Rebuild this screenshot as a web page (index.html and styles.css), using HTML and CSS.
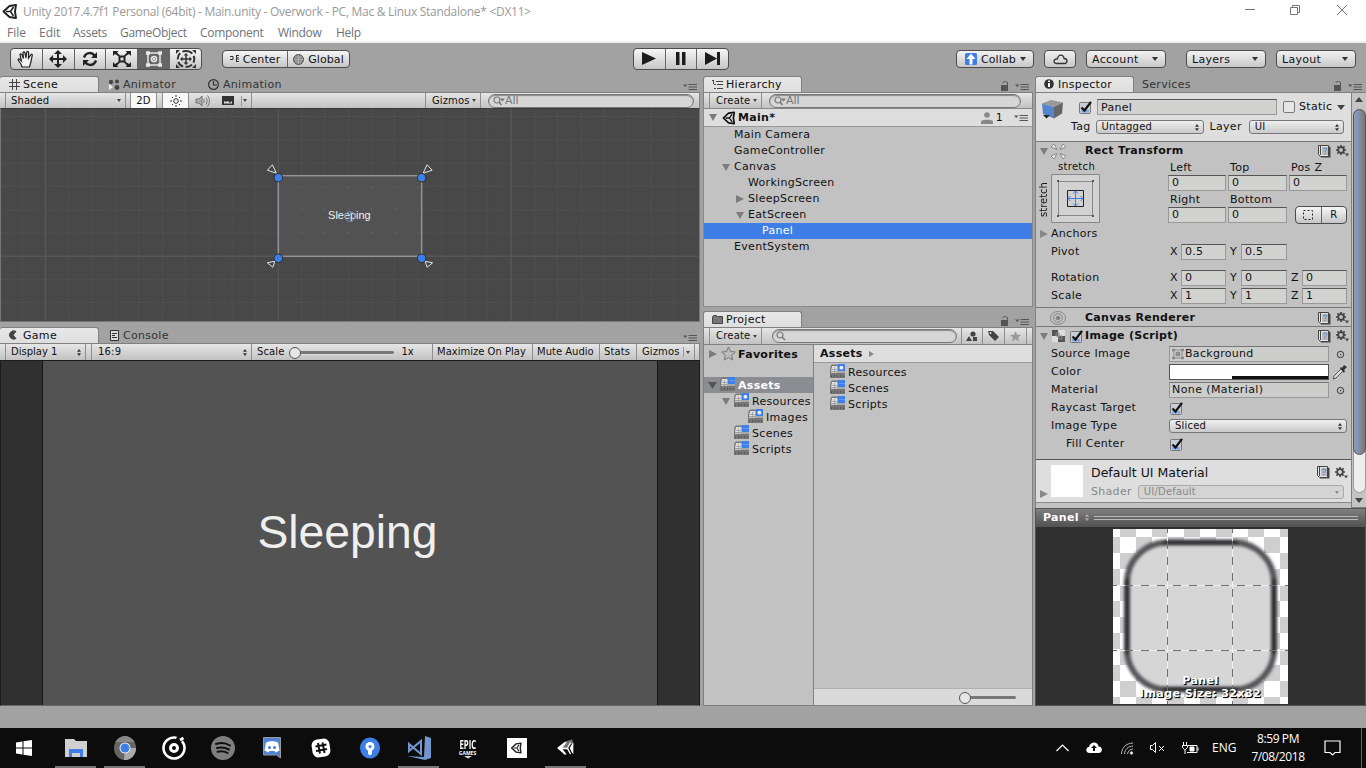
FILE: index.html
```html
<!DOCTYPE html>
<html lang="en">
<head>
<meta charset="utf-8">
<title>Unity 2017.4.7f1 Personal (64bit) - Main.unity</title>
<link rel="stylesheet" href="styles.css">
</head>
<body>
<svg class="defs" width="0" height="0">
  <defs>
    <symbol id="unity" viewBox="0 0 16 16"><path fill="none" stroke="currentColor" stroke-width="1.900" stroke-linejoin="round" d="M1.500 8 7.500 2.500 14 1.500 13 8l1 6.500-6.500-1z"/><path stroke="currentColor" stroke-width="1.500" d="M8.500 8H4M8.500 8l3-4.500M8.500 8l3 4.500"/></symbol>
    <symbol id="unityfill" viewBox="0 0 16 16"><path fill="#777" d="M8 2 13.500.500 15 6 13 4.500 8.500 7.500H2.500z"/><path fill="#fff" d="M.500 7.500 7 2.500l1.500.500L5 7.500h4L11.500 3l1 .5L10 8l2.500 5-1 .5L9 9H5l3.500 4.500-1.500.500L.500 8.500z"/><path fill="#fff" d="m13 5 1.500-2V13.500L13 11.500 11.300 8z"/></symbol>
    <symbol id="menu" viewBox="0 0 14 8"><path fill="#555" d="M0 1.500h4.500L2.200 4zM5.500 1H14v1H5.500zM5.500 3.500H14v1H5.500zM5.500 6H14v1H5.500z"/></symbol>
    <symbol id="lock" viewBox="0 0 8 10"><path fill="#555" d="M0 4h6V2.500C6 .500 2.500.500 2.500 2H1.500C1.500-.500 7-.500 7 2.500V10H0z"/></symbol>
    <symbol id="search" viewBox="0 0 12 10"><circle cx="4" cy="4" r="3" fill="none" stroke="#777" stroke-width="1.200"/><path stroke="#777" stroke-width="1.500" d="m6 6 3 3"/></symbol>
    <symbol id="searchd" viewBox="0 0 12 10"><circle cx="4" cy="4" r="3" fill="none" stroke="#777" stroke-width="1.200"/><path stroke="#777" stroke-width="1.500" d="m6 6 2.500 3"/><path fill="#777" d="M7 2.500h5L9.500 5.500z"/></symbol>
    <symbol id="down" viewBox="0 0 8 7"><path fill="#7c7c7c" d="M0 0h8L4 7z"/></symbol>
    <symbol id="updown" viewBox="0 0 4 7"><path fill="#333" d="M0 2.700 2 0l2 2.700zM0 4.300h4L2 7z"/></symbol>
    <symbol id="book" viewBox="0 0 13 13"><path fill="#e4e4e4" stroke="#444" d="M.500.500h10v11H2.500l-2-2z"/><path fill="#444" d="M11 1.500l1.500.500v10.500H3v-1h8zM2 1h1v9H2z"/><path fill="#bbb" d="M4 2h6v8H4z"/><path fill="none" stroke="#457fd8" d="M5.500 4.500c0-2 3.500-2 3 0-.200 1-1.500 1-1.500 2.500M7 8v1"/></symbol>
    <symbol id="gear" viewBox="0 0 14 12"><circle cx="5" cy="5" r="2.800" fill="none" stroke="#444" stroke-width="1.800"/><path stroke="#444" stroke-width="1.700" d="M5 0v2M5 8v2M0 5h2M8 5h2M1.400 1.400 3 3M7 7l1.600 1.600M1.400 8.600 3 7M7 3l1.600-1.600"/><path fill="#444" d="M9 8.500h4L11 11.500z"/></symbol>
    <symbol id="folder" viewBox="0 0 16 14"><path fill="#777" d="M.500 2 2 .500h6.500v4H15V14H0V7z"/><path fill="#ddd" d="M2 2h5.500v5H1z"/><path fill="#ccc" d="M1 7.500h7V9H1z"/><path fill="#a8a8a8" d="M7 7h8v2H7z"/><path fill="#555" d="M1 11.500h1v1.500H1zM4 11h1v2H4zM7 11.500h1v1.500H7zM10 11h1v2h-1zM13 11.500h1v1.500h-1z"/><path stroke="#999" stroke-width=".700" d="M4.500 3v6M1.500 5.500h6"/><path fill="#3d80e8" d="M8 0h7v7H8z"/></symbol>
    <symbol id="folders" viewBox="0 0 16 14"><use href="#folder"/><path fill="#8cb2f0" d="M9.500 3h1v1h-1zM11.500 3h1v1h-1zM13.500 3h1v1h-1z"/></symbol>
    <symbol id="folderr" viewBox="0 0 16 14"><use href="#folder"/><circle cx="11.400" cy="3.700" r="1.900" fill="#eee"/></symbol>
    <symbol id="check" viewBox="0 0 13 13"><rect x=".500" y="1.500" width="11" height="11" rx="1" fill="#c9cdd5" stroke="#777"/><path fill="#7fa6e4" d="M2 9h8v2.500H2z"/><path fill="none" stroke="#111" stroke-width="2.200" d="m2.500 6.500 3 3L12 .800"/></symbol>
    <symbol id="spin" viewBox="0 0 9 9"><circle cx="4.500" cy="4.500" r="3.200" fill="none" stroke="#333"/><rect x="4" y="4" width="1.200" height="1.200" fill="#333"/></symbol>
  </defs>
</svg>

<header class="titlebar">
  <svg class="logo" width="16" height="17"><use href="#unity"/></svg>
  <span class="title">Unity 2017.4.7f1 Personal (64bit) - Main.unity - Overwork - PC, Mac &amp; Linux Standalone* &lt;DX11&gt;</span>
  <svg class="winbtns" width="104" height="12" fill="none" stroke="#777"><path d="M1 5.500h10M46.500 3.500h7v7h-7zM48.500 3.500v-2h7v7h-2M93 1l10 10M103 1 93 11"/></svg>
</header>
<nav class="menubar"><span class="m1">File</span><span class="m2">Edit</span><span class="m3">Assets</span><span class="m4">GameObject</span><span class="m5">Component</span><span class="m6">Window</span><span>Help</span></nav>

<div class="toolbar">
  <div class="btns tools">
    <i><svg width="18" height="18" fill="none" stroke="#222" stroke-width="1.200"><path d="M5 17c0-2.500-3-5-4-7.500 1-1.500 2 0 3.500 1.500L3 4.500C4 3 5 4.500 5.500 6L6.500 8.500 6 2.500c1-1.500 2 0 2 1L9 8l.800-6c1-1.200 2 0 1.800 1L11.500 8.300 14 4.500c1.500-.500 1.500.500 1 2l-1 5L12.500 17z" fill="#f4f4f4"/></svg></i>
    <i><svg width="18" height="18"><path fill="#222" d="m9 0 4 4h-3v4h4V5l4 4-4 4v-3h-4v4h3l-4 4-4-4h3v-4H4v3L0 9l4-4v3h4V4H5z"/></svg></i>
    <i><svg width="18" height="16" fill="none" stroke="#222" stroke-width="2.400"><path d="M3 6.500C5 1 11 1 13.500 4.500M15 9.500c-2 5.500-8 5.500-10.500 2"/><path fill="#222" stroke="none" d="M16 1v6h-6zM2 15V9h6z"/></svg></i>
    <i><svg width="18" height="16"><path fill="#222" d="M0 0h5.500L4 1.500 7 4.500 6 5.500 2 3 0 5zM18 0h-5.500L14 1.500l-3 3 1 1L16 3l2 2zM0 16h5.500L4 14.500l3-3-1-1L2 13l-2-2zM18 16h-5.500l1.500-1.500-3-3 1-1 4 2.500 2-2z"/><path fill="#ddd" stroke="#222" stroke-width="2" d="M6.500 5.500h5v5h-5z"/></svg></i>
    <i class="on"><svg width="18" height="18" fill="none" stroke="#e8e8e8" stroke-width="1.500"><path d="M3 3h12v12H3z"/><circle cx="9" cy="9" r="2.600"/><path stroke-width="3.500" d="M1 3h4M13 3h4M1 15h4M13 15h4"/><circle cx="9" cy="9" r=".600"/></svg></i>
    <i><svg width="20" height="18" fill="none" stroke="#333" stroke-width="2"><path stroke-dasharray="7 2.500" d="M10 1c11 0 11 16 0 16S-1 1 10 1"/><path stroke-width="1.500" d="M10 4v10M5 9h10"/><path fill="#333" stroke="none" d="m10 3 2.500 2.500h-5zM10 15l2.500-2.500h-5zM4 9l2.500-2.500v5zM16 9l-2.500-2.500v5zM0 0h4L0 4zM20 0h-4l4 4zM0 18h4l-4-4zM20 18h-4l4-4z"/></svg></i>
  </div>
  <div class="btns pivot">
    <i><svg width="10" height="8" fill="none" stroke="#333"><path d="M0 1.500h3v3H0M6 .500h3M6 6.500h3M6.500 0v7M8 2v3"/></svg><span>Center</span></i>
    <i><svg width="12" height="11" fill="none" stroke="#555"><circle cx="5.500" cy="5.500" r="5" fill="#888"/><path d="M1 5.500h9M5.500 1v9M2 3h7M2 8h7" stroke="#bbb" stroke-width=".700"/></svg><span>Global</span></i>
  </div>
  <div class="btns play">
    <i><svg width="16" height="14"><path fill="#1c1c1c" d="M1 0v13l14-6.500z"/></svg></i>
    <i><svg width="10" height="14"><path fill="#1c1c1c" d="M0 0h3.500v13H0zM6 0h3.500v13H6z"/></svg></i>
    <i><svg width="16" height="14"><path fill="#1c1c1c" d="M0 0v13l12-6.500zM12 0h3v13h-3z"/></svg></i>
  </div>
  <div class="drop collab"><svg width="12" height="12"><rect width="12" height="12" rx="1.500" fill="#3d7fe6"/><path fill="#fff" d="m6 .500 4.500 5.500H7.500v5.500h-3V6h-3z"/></svg><span>Collab</span><b></b></div>
  <div class="drop cloud"><svg width="15" height="11" fill="none" stroke="#333" stroke-width="1.300"><path d="M4 9.500c-4.500 0-3.500-5 .500-4.500C5 0 11 0 11 4.500c4 0 4 5 0 5z"/></svg></div>
  <div class="drop account"><span>Account</span><b></b></div>
  <div class="drop layers"><span>Layers</span><b></b></div>
  <div class="drop layout"><span>Layout</span><b></b></div>
</div>

<main class="work">
  <section class="left">
    <div class="tabs">
      <div class="tab sc"><svg width="12" height="12" stroke="#444" fill="none"><path d="M3.500 0v11M7.500 0v11M0 3.500h11M0 7.500h11"/></svg>Scene</div>
      <div class="idle an1"><svg width="13" height="12" fill="#444"><circle cx="3" cy="3" r="2.200"/><circle cx="9" cy="2.500" r="2"/><circle cx="9" cy="8.500" r="2.400"/><path fill="#eee" d="M1 5v6l4-3z"/></svg>Animator</div>
      <div class="idle an2"><svg width="13" height="12" fill="none" stroke="#333" stroke-width="1.200"><circle cx="5.500" cy="5.500" r="4.900"/><path d="M5.500 2v4H9"/></svg>Animation</div>
      <svg class="pm" width="14" height="8"><use href="#menu"/></svg>
    </div>
    <div class="bar scenebar">
      <div class="cell shaded">Shaded<b></b></div><div class="cell lit two">2D</div><div class="sp7"></div>
      <div class="cell lit sun"><svg width="12" height="12" fill="none" stroke="#333"><circle cx="6" cy="6" r="2.300"/><path d="M6 0v2M6 10v2M0 6h2M10 6h2M2 2l1 1M9 9l1 1M2 10l1-1M9 3l1-1"/></svg></div>
      <div class="cell snd"><svg width="15" height="12" fill="none" stroke="#777"><path fill="#aaa" d="M1 4h3l3-3v10L4 8H1z"/><path d="M9 4v4M11 2.500c1.500 2 1.500 5 0 7M12.500.500c2.500 3 2.500 8 0 11"/></svg></div>
      <div class="cell pic"><svg width="13" height="10"><path fill="#333" d="M0 0h12v9H0z"/><path fill="#ddd" d="M2 7.500V5l2 1 2-1 2 2 2-2v2.500z"/></svg><u></u><b></b></div>
      <div class="cell giz">Gizmos<b></b></div>
      <div class="search"><svg width="14" height="10"><use href="#searchd"/></svg>All</div>
    </div>
    <div class="scene">
      <svg width="698" height="213" viewBox="1 108 698 213">
        <path class="grid" d="M20.500 108v213M67.500 108v213M91.500 108v213M114.500 108v213M137.500 108v213M161.500 108v213M184.500 108v213M208.500 108v213M231.500 108v213M254.500 108v213M301.500 108v213M324.500 108v213M348.500 108v213M371.500 108v213M394.500 108v213M418.500 108v213M442.500 108v213M465.500 108v213M488.500 108v213M535.500 108v213M558.500 108v213M582.500 108v213M605.500 108v213M629.500 108v213M652.500 108v213M675.500 108v213M0 115.500h700M0 139.500h700M0 162.500h700M0 185.500h700M0 209.500h700M0 232.500h700M0 279.500h700M0 302.500h700"/>
        <path stroke="#565656" stroke-width="1.500" d="M44 108v213M278 108v213M512 108v213M0 256h700"/>
        <rect x="278" y="175" width="144" height="81" fill="#525252" stroke="#939398" stroke-width="1.500"/>
        <path class="dots" d="M301 186.500h121M301 208.500h121M301 232.500h121"/>
        <text x="328" y="219" class="slabel">Sleeping</text>
        <circle cx="350" cy="216" r="5" fill="none" stroke="#888"/><path fill="none" stroke="#457fd8" stroke-dasharray="1.500 1.500" d="M347 212h6M348 221h5M345 214v4M355 214v4"/>
        <path class="tri" d="m267 169.500 5-5.500 4 8.500zM432.500 169.500l-5-5.500-4 8.500zM267 262.500l5.500 4.500 2-6zM433 262.500l-5.500 4.500-2-6z"/>
        <g fill="#3d7fe6" stroke="#2c2c2c"><circle cx="278" cy="177" r="4.300"/><circle cx="422" cy="177" r="4.300"/><circle cx="278" cy="258" r="4.300"/><circle cx="422" cy="258" r="4.300"/></g>
      </svg>
    </div>
    <div class="tabs gametabs">
      <div class="tab gm"><svg width="12" height="11"><path fill="#444" d="M8.500 1.500 5.500 5l3 3.500A4.500 4.500 0 1 1 8.500 1.500"/></svg>Game</div>
      <div class="idle cons"><svg width="10" height="12" fill="#ddd" stroke="#333"><path d="M.500.500h8v10h-8zM2 3.500h5M2 5.500h3M2 7.500h5"/></svg>Console</div>
      <svg class="pm" width="14" height="8"><use href="#menu"/></svg>
    </div>
    <div class="bar gamebar">
      <div class="cell disp">Display 1<svg width="4" height="7"><use href="#updown"/></svg></div>
      <div class="cell none"></div>
      <div class="cell ratio">16:9<svg width="4" height="7"><use href="#updown"/></svg></div>
      <div class="cell scale">Scale<div class="slider"></div>1x</div>
      <div class="cell mx">Maximize On Play</div><div class="cell mu">Mute Audio</div><div class="cell st">Stats</div><div class="cell gz">Gizmos<u></u><b></b></div>
    </div>
    <div class="game"><div class="stage"><span>Sleeping</span></div></div>
  </section>

  <section class="mid">
    <div class="tabs">
      <div class="tab hi"><svg width="12" height="10" fill="none" stroke="#444"><path d="M0 .500h2M4 1.500h7M2 4.500h2M5 4.500h6M2 8.500h2M5 8.500h6M1.500 1v3"/></svg>Hierarchy</div>
      <svg class="lk" width="8" height="10"><use href="#lock"/></svg><svg class="pm" width="14" height="8"><use href="#menu"/></svg>
    </div>
    <div class="bar hbar"><div class="cell create">Create<b></b></div><div class="search"><svg width="14" height="10"><use href="#searchd"/></svg>All</div></div>
    <div class="tree">
      <div class="scenehead"><svg width="8" height="7"><use href="#down"/></svg><svg class="ul" width="14" height="14"><use href="#unity"/></svg><strong>Main*</strong><svg class="usr" width="12" height="12" fill="#888"><circle cx="6" cy="3" r="2.800"/><path d="M0 12V9.500C0 7 12 7 12 9.500V12z"/></svg><em>1</em><svg width="14" height="8"><use href="#menu"/></svg></div>
      <div class="row r1">Main Camera</div>
      <div class="row r1">GameController</div>
      <div class="row r1 tog"><svg width="8" height="7"><use href="#down"/></svg>Canvas</div>
      <div class="row r2">WorkingScreen</div>
      <div class="row r2 tog"><svg width="8" height="8"><path fill="#7c7c7c" d="M0 0v8l8-4z"/></svg>SleepScreen</div>
      <div class="row r2 tog"><svg width="8" height="7"><use href="#down"/></svg>EatScreen</div>
      <div class="row r3 sel">Panel</div>
      <div class="row r1">EventSystem</div>
    </div>
    <div class="tabs protabs">
      <div class="tab hi"><svg width="12" height="10"><path fill="#777" stroke="#444" d="M.500 2v6.500h10v-7h-5l-1-1h-3z"/></svg>Project</div>
      <svg class="lk" width="8" height="10"><use href="#lock"/></svg><svg class="pm" width="14" height="8"><use href="#menu"/></svg>
    </div>
    <div class="bar pbar"><div class="cell create">Create<b></b></div><div class="search"><svg width="12" height="10"><use href="#search"/></svg></div>
      <div class="cell ic"><svg width="12" height="11" fill="#444"><circle cx="7" cy="3" r="2.600"/><path d="M0 10l3-5 3 5zM7 6h4v4H7z"/></svg></div>
      <div class="cell ic"><svg width="12" height="12"><path fill="#444" d="M0 1h5l6 6-4 4-6-6z"/><circle cx="2.500" cy="3" r="1" fill="#ddd"/></svg></div>
      <div class="cell ic"><svg width="12" height="11"><path fill="#999" d="m5.500 0 1.600 3.700 4 .300-3 2.600 1 3.900-3.600-2.200-3.500 2.200 1-3.900-3-2.600 4-.300z"/></svg></div><div class="cell end"></div>
    </div>
    <div class="project">
      <div class="folders">
        <div class="fr fav"><svg width="8" height="8"><path fill="#7c7c7c" d="M0 0v8l8-4z"/></svg><svg width="15" height="15"><path fill="#bbb" stroke="#777" d="m7.500 1 2 4.500 4.800.500-3.600 3.300 1 4.700-4.200-2.400L3.300 14l1-4.700L.700 6l4.800-.500z"/></svg><strong>Favorites</strong></div>
        <div class="fr root"><svg width="9" height="7"><path fill="#555" d="M0 0h9L4.500 7z"/></svg><svg width="16" height="14"><use href="#folders"/></svg><strong>Assets</strong></div>
        <div class="fr f1"><svg width="8" height="7"><use href="#down"/></svg><svg width="16" height="14"><use href="#folderr"/></svg><span>Resources</span></div>
        <div class="fr f3"><svg width="16" height="14"><use href="#folderr"/></svg><span>Images</span></div>
        <div class="fr f2"><svg width="16" height="14"><use href="#folders"/></svg><span>Scenes</span></div>
        <div class="fr f2"><svg width="16" height="14"><use href="#folders"/></svg><span>Scripts</span></div>
      </div>
      <div class="assets">
        <div class="crumb"><strong>Assets</strong><svg width="5" height="6"><path fill="#888" d="M0 0v6l5-3z"/></svg></div>
        <div class="fr"><svg width="16" height="14"><use href="#folderr"/></svg><span>Resources</span></div>
        <div class="fr"><svg width="16" height="14"><use href="#folders"/></svg><span>Scenes</span></div>
        <div class="fr"><svg width="16" height="14"><use href="#folders"/></svg><span>Scripts</span></div>
        <div class="zoombar"><div class="slider"></div></div>
      </div>
    </div>
  </section>

  <section class="right">
    <div class="tabs">
      <div class="tab ins"><svg width="12" height="11"><circle cx="5" cy="5" r="4.800" fill="#333"/><path fill="#fff" d="M4.200 1.500h1.800v1.500H4.200zM4 4h2v4H4z"/></svg>Inspector</div><div class="idle serv">Services</div>
      <svg class="lk" width="8" height="10"><use href="#lock"/></svg><svg class="pm" width="14" height="8"><use href="#menu"/></svg>
    </div>
    <div class="insp">
      <div class="props">
        <div class="objhead">
          <svg class="cube" width="24" height="22"><path fill="#999" d="M1 4.500 10 1l12 2.500-9 4.500z"/><path fill="#5584cf" d="m1 4.500 12 3.500v11.500L2 15z"/><path fill="#666" d="m13 8 9-4.500-1 11-8 5z"/><path fill="#222" d="M2 16h7l-3.500 3.500z"/></svg>
          <div class="oh">
            <div class="ohr"><svg class="ck" width="13" height="13"><use href="#check"/></svg><div class="fld nm">Panel</div><div class="box"></div><span>Static</span><b></b></div>
            <div class="ohr tg"><span>Tag</span><div class="pop p1">Untagged<svg width="4" height="7"><use href="#updown"/></svg></div><span>Layer</span><div class="pop p2">UI<svg width="4" height="7"><use href="#updown"/></svg></div></div>
          </div>
        </div>
        <div class="comp rt">
          <div class="ch"><svg class="ar" width="8" height="7"><use href="#down"/></svg><svg class="ci" width="17" height="17" fill="#eee" stroke="#888"><path d="m1 4 3-3 3 5.500zM16 4l-3-3-3 5.500zM1 13l3 3 3-5.500zM16 13l-3 3-3-5.500z"/></svg><strong>Rect Transform</strong><svg class="bk" width="13" height="13"><use href="#book"/></svg><svg width="14" height="12"><use href="#gear"/></svg></div>
          <div class="rect">
            <div class="vert">stretch</div>
            <div class="anch"><span>stretch</span><svg width="49" height="49"><path fill="#d2d2d2" stroke="#888" d="M.500.500h48v48H.500z"/><path fill="none" stroke="#888" d="M7.500 7.500h34v34h-34z"/><path fill="#555" d="M6 6h2v2H6zM41 6h2v2h-2zM6 41h2v2H6zM41 41h2v2h-2z"/><path fill="none" stroke="#222" d="M16.500 16.500h16v16h-16z"/><path stroke="#3d7fe6" fill="none" d="M24.500 17v15M17 24.500h15M22 19.500l2.500-2.500 2.500 2.500M22 29.500l2.500 2.500 2.500-2.500M19.500 22 17 24.500l2.500 2.500M29.500 22l2.500 2.500-2.500 2.500"/></svg></div>
            <div class="vals">
              <span>Left</span><span>Top</span><span>Pos Z</span>
              <div class="fld">0</div><div class="fld">0</div><div class="fld">0</div>
              <span>Right</span><span>Bottom</span><span></span>
              <div class="fld">0</div><div class="fld">0</div>
              <div class="btns br"><i><svg width="11" height="11" fill="none" stroke="#222"><path stroke-dasharray="2 2" d="M.500.500h9v9h-9z"/></svg></i><i>R</i></div>
            </div>
          </div>
          <div class="pr anr"><svg width="8" height="8"><path fill="#888" d="M0 0v8l8-4z"/></svg><label>Anchors</label></div>
          <div class="pr"><label>Pivot</label><div class="xyz"><q>X</q><div class="fld">0.5</div><q>Y</q><div class="fld">0.5</div></div></div>
          <div class="pr rot"><label>Rotation</label><div class="xyz"><q>X</q><div class="fld">0</div><q>Y</q><div class="fld">0</div><q>Z</q><div class="fld">0</div></div></div>
          <div class="pr"><label>Scale</label><div class="xyz"><q>X</q><div class="fld">1</div><q>Y</q><div class="fld">1</div><q>Z</q><div class="fld">1</div></div></div>
        </div>
        <div class="comp cr"><div class="ch"><svg class="ci off" width="17" height="15" fill="none" stroke="#888"><ellipse cx="8" cy="7" rx="7.500" ry="6.500"/><circle cx="8" cy="7" r="4.300"/><circle cx="8" cy="7" r="1.800" fill="#777"/></svg><strong>Canvas Renderer</strong><svg class="bk" width="13" height="13"><use href="#book"/></svg><svg width="14" height="12"><use href="#gear"/></svg></div></div>
        <div class="comp img">
          <div class="ch"><svg class="ar" width="8" height="7"><use href="#down"/></svg><svg class="ci2" width="13" height="13"><path fill="#ddd" d="M0 0h13v12H0z"/><path fill="#555" d="M0 0h6v6H0zM6 6h7v6H6z"/><path fill="none" stroke="#888" d="M4 3h3v3H4zM7 6h3v3H7z"/></svg><svg width="13" height="13"><use href="#check"/></svg><strong>Image (Script)</strong><svg class="bk" width="13" height="13"><use href="#book"/></svg><svg width="14" height="12"><use href="#gear"/></svg></div>
          <div class="pr"><label>Source Image</label><div class="obj"><svg width="12" height="12" fill="none" stroke="#888"><path d="M2 2h8v8H2z"/><circle cx="6" cy="6" r="1.500" stroke-width="2"/><path stroke-width="2.500" d="M0 2h3M9 2h3M0 10h3M9 10h3"/></svg>Background</div><svg width="9" height="9"><use href="#spin"/></svg></div>
          <div class="pr"><label>Color</label><div class="color"><s></s></div><svg class="dropper" width="15" height="15"><path fill="#ddd" stroke="#555" d="m1 14 1-3 7-7 2 2-7 7z"/><path fill="#333" d="m8 3 1-1 1 1 2-3 3 2-3 3 1 1-1 2z"/></svg></div>
          <div class="pr"><label>Material</label><div class="obj mt">None (Material)</div><svg width="9" height="9"><use href="#spin"/></svg></div>
          <div class="pr ckr"><label>Raycast Target</label><svg width="13" height="13"><use href="#check"/></svg></div>
          <div class="pr"><label>Image Type</label><div class="pop p3">Sliced<svg width="4" height="7"><use href="#updown"/></svg></div></div>
          <div class="pr ckr sub"><label>Fill Center</label><svg width="13" height="13"><use href="#check"/></svg></div>
        </div>
        <div class="mat"><svg class="ma" width="8" height="8"><path fill="#888" d="M0 0v8l8-4z"/></svg><div class="sw"></div>
          <div class="mi"><div class="m1r"><span>Default UI Material</span><svg class="bk" width="13" height="13"><use href="#book"/></svg><svg width="14" height="12"><use href="#gear"/></svg></div><div class="m2r"><span>Shader</span><div class="pop dis">UI/Default<b></b></div></div></div>
        </div>
      </div>
      <div class="scroll"><b class="up"></b><div class="track"><div class="thumb"></div></div><b></b></div>
    </div>
    <div class="pvhead"><strong>Panel</strong><svg width="4" height="7"><use href="#updown"/></svg><div class="grip"></div></div>
    <div class="preview">
      <svg width="175" height="175" viewBox="0 0 175 175">
        <defs>
          <pattern id="chk" width="32" height="32" patternUnits="userSpaceOnUse" x="7" y="8"><rect width="32" height="32" fill="#fff"/><path fill="#cfcfcf" d="M0 16h16v16H0zM16 0h16v16H16z"/></pattern>
          <filter id="soft" x="-10%" y="-10%" width="120%" height="120%"><feGaussianBlur stdDeviation="1.700"/></filter>
        </defs>
        <rect width="175" height="175" fill="url(#chk)"/>
        <rect x="13" y="13" width="149" height="148" rx="40" fill="#d6d6d6"/>
        <rect x="14" y="13.500" width="147" height="147" rx="40" fill="none" stroke="#55555a" stroke-width="6" filter="url(#soft)"/>
        <path fill="none" stroke="#222" stroke-width="2.500" filter="url(#soft)" d="M50 13.500h75M50 160.500h75M14 50v75M161 50v75"/>
        <path class="ln" d="M54.500 0v175M119.500 0v175M0 56.500h175M0 121.500h175"/>
        <path class="ln2" d="M54.500 0v175M119.500 0v175M0 56.500h175M0 121.500h175"/>
      </svg>
      <div class="cap">Panel<br>Image Size: 32x32</div>
    </div>
  </section>
</main>

<footer class="taskbar">
  <div class="app start"><svg width="16" height="16" fill="#fff"><path d="M0 2.500 6.500 1.500v6H0zM7.500 1.300 16 0v7.500H7.500zM0 8.500h6.500v6L0 13.600zM7.500 8.500H16V16l-8.500-1.300z"/></svg></div>
  <div class="app run"><svg width="22" height="20"><path fill="#d0d0d0" d="M0 1h9l2 2h11v16H0z"/><path fill="#3d7fe6" d="M4 11h14v8h-3v-4H7v4H4z"/></svg></div>
  <div class="app run"><svg width="22" height="24"><ellipse cx="11" cy="12" rx="11" ry="12" fill="#666"/><path fill="#aaa" d="M11 12h11a11 12 0 0 1-12 12z"/><path fill="#888" d="M1.500 6a11 12 0 0 1 19 0H11z"/><circle cx="11" cy="12" r="5.500" fill="#eee"/><circle cx="11" cy="12" r="4.500" fill="#3d7fe6"/></svg></div>
  <div class="app"><svg width="24" height="24" fill="none" stroke="#fff"><path stroke-width="2.600" d="M20 5.200A10.500 10.500 0 1 1 14.500 1.800M18 4l3.500-2"/><circle cx="12" cy="12" r="3.500" stroke-width="3"/></svg></div>
  <div class="app"><svg width="24" height="24"><circle cx="12" cy="12" r="12" fill="#7e7e7e"/><path fill="none" stroke="#111" stroke-width="2" stroke-linecap="round" d="M5 8c4-1.300 10-1 14 1.500M6 12c4-1 8-.500 12 1.500M6.500 15.700c3.500-.800 7-.300 10 1.200"/></svg></div>
  <div class="app"><svg width="20" height="22"><path fill="#4d82d6" stroke="#999" d="M1.500.500h17V21l-4-3h-13z"/><path fill="#fff" d="M4 5.500c4-2 8-2 12 0l1.500 8-4 2-1-1.500h-5l-1 1.500-4-2z"/><circle cx="7.500" cy="10.500" r="1.500" fill="#3d7fe6"/><circle cx="12.500" cy="10.500" r="1.500" fill="#3d7fe6"/></svg></div>
  <div class="app"><svg width="20" height="20"><rect x="1" y="1" width="18" height="18" rx="6" fill="#fff" transform="rotate(-8 10 10)"/><path stroke="#111" stroke-width="2" d="m7 5 2 10.500M11.500 4.500l2 10.500M4.500 8.500l11-2M5 13l11-2"/></svg></div>
  <div class="app"><svg width="20" height="22"><ellipse cx="10" cy="11" rx="10" ry="10.500" fill="#3d7fe6"/><circle cx="10" cy="9.500" r="4.500" fill="#fff"/><path fill="#fff" d="M8 12h4v5l-2 1.500L8 17z"/><circle cx="10" cy="9.500" r="1.500" fill="#3d7fe6"/></svg></div>
  <div class="app run"><svg width="24" height="24"><path fill="#7195cf" d="m18 0 6 2v20l-6 2-18-4 17 1z"/><path fill="none" stroke="#7195cf" stroke-width="2" d="M14 5v13L2 8v7z"/></svg></div>
  <div class="app epic"><span>EPIC</span><small>GAMES</small><svg width="8" height="3"><path fill="#ddd" d="M0 0h8L4 2.500z"/></svg></div>
  <div class="app"><svg width="20" height="20"><path fill="#fff" d="M0 0h20v20H0z"/><svg x="3.500" y="4" width="12" height="12" color="#222"><use href="#unity"/></svg></svg></div>
  <div class="app run"><svg width="18" height="20"><use href="#unityfill"/></svg></div>
  <div class="tray">
    <svg class="t1" width="13" height="8" fill="none" stroke="#fff" stroke-width="1.200"><path d="m.500 7 6-6 6 6"/></svg>
    <svg class="t2" width="16" height="12"><path fill="#fff" d="M3.500 11C-1 11-.500 5 3 5 4-1 12-1 12.500 4.500c4.500 0 4.500 6.500 0 6.500z"/><path fill="#111" d="m8 3 3 3H9v3H7V6H5z"/></svg>
    <svg class="t3" width="13" height="13" fill="none" stroke="#bbb"><path d="M.500 12C1 5 5 1.500 12 1M3.500 12C4 7 7 4.500 12 4M6.500 12C7 9 9 7 12 7"/><circle cx="10.500" cy="11" r="1.300" fill="#fff"/></svg>
    <svg class="t4" width="16" height="12" fill="none" stroke="#fff"><path d="M.500 3.500h2l3-3v10l-3-3h-2zM9 4l5 5M14 4 9 9"/></svg>
    <svg class="t5" width="17" height="13" fill="none" stroke="#fff"><path d="M6 3.500h9v7H5M16 5.500v3M1.500 0v3M4.500 0v3M.500 3.500h5v2l-2 2h-1l-2-2zM3 8v4"/><path fill="#fff" d="M8 5h4v4H8z"/></svg>
    <span class="eng">ENG</span>
    <div class="clock"><span>8:59 PM</span><span>7/08/2018</span></div>
    <svg class="t6" width="17" height="16" fill="none" stroke="#fff" stroke-width="1.200"><path d="M1 1h15v11.500h-5L8.500 15 6 12.500H1z"/></svg>
  </div>
</footer>
</body>
</html>
```
FILE: styles.css
```css
* { box-sizing: border-box; }
body { margin: 0; width: 1366px; height: 768px; overflow: hidden; background: #a2a2a2; font: 11px/16px "DejaVu Sans", sans-serif; letter-spacing: .3px; color: #111; display: flex; flex-direction: column; white-space: nowrap; }
svg { display: block; flex: none; }
.defs { position: absolute; }
i, em { font-style: normal; }
q { quotes: none; }
strong { font-weight: bold; color: #111; }

.titlebar { height: 22px; background: #fff; display: flex; align-items: center; padding: 0 6px 0 2px; font: 12px/22px "Open Sans", sans-serif; letter-spacing: -.28px; color: #999; }
.logo { color: #222; margin-right: 5px; }
.title { flex: 1; padding-top: 1px; }
.winbtns { margin: 0 12px 2px 0; }
.menubar { height: 21px; background: #fff; border-bottom: 2px solid #efefef; display: flex; padding-left: 7px; font: 12px/21px "Open Sans", sans-serif; letter-spacing: -.3px; color: #6e7278; }
.m1 { width: 32px; } .m2 { width: 34px; } .m3 { width: 47px; } .m4 { width: 80px; } .m5 { width: 78px; } .m6 { width: 58px; }
.m1, .m2 { letter-spacing: 0; }

.toolbar { height: 33px; display: flex; padding: 5px 10px; align-items: flex-start; }
.btns { display: flex; border: 1px solid #4c4c4c; border-radius: 4px; background: linear-gradient(#f6f6f6, #c6c6c6); overflow: hidden; }
.btns i { flex: 1; display: flex; align-items: center; justify-content: center; border-left: 1px solid #666; }
.btns i:first-child { border-left: 0; }
.btns .on { background: #666; }
.tools { width: 192px; height: 22px; }
.pivot { width: 128px; height: 18px; margin: 2px 0 0 20px; font-size: 11px; letter-spacing: .1px; }
.pivot i:first-child { flex: 0 0 64px; }
.pivot span, .drop span { padding-top: 1px; }
.pivot svg { margin-right: 3px; }
.play { width: 96px; height: 22px; margin-left: 283px; }
.drop { height: 18px; margin: 2px 0 0 10px; border: 1px solid #4c4c4c; border-radius: 4px; background: linear-gradient(#f2f2f2, #c8c8c8); display: flex; align-items: center; padding: 0 7px 0 5px; letter-spacing: .3px; }
.drop span { flex: 1; }
b { width: 0; height: 0; border: 3px solid transparent; border-top: 4px solid #333; border-bottom: 0; }
.collab { width: 78px; margin-left: 227px; padding-left: 8px; letter-spacing: .1px; } .collab svg { margin-right: 4px; }
.cloud { width: 32px; padding: 0 8px; }
.account, .layers, .layout { width: 80px; }
.layers { margin-left: 20px; }

.work { height: 630px; display: grid; grid-template-columns: 700px 330px 330px; column-gap: 3px; }
.work > section { display: flex; flex-direction: column; height: 630px; min-width: 0; }
.work > .right { margin-left: -1px; }
.tabs { height: 16px; display: flex; color: #333; flex: none; }
.tab { height: 16px; width: 99px; background: linear-gradient(#e8e8e8, #dedede); border: 1px solid #808080; border-bottom: 0; border-radius: 3px 3px 0 0; display: flex; align-items: center; padding-left: 8px; color: #111; }
.tab svg, .idle svg { margin-right: 2px; }
.idle { display: flex; align-items: center; padding-top: 1px; }
.sc { border-left: 0; padding-left: 9px; }
.an1 { margin-left: 9px; width: 100px; } .an2 { width: 100px; }
.pm { margin: 7px 0 0 auto; }
.lk { margin: 5px 0 0 auto; } .lk + .pm { margin-left: 6px; }
.left .pm { margin-right: 3px; }
.mid .pm, .right .pm { margin-right: 4px; }
.bar { height: 16px; flex: none; background: linear-gradient(#e6e6e6, #c2c2c2); border: 1px solid #808080; border-width: 1px 1px 0 0; display: flex; font-size: 10px; letter-spacing: .1px; }
.cell { border-right: 1px solid #8e8e8e; display: flex; align-items: center; flex: none; }
.cell b { border-width: 3px 2.500px 0; border-top: 3px solid #444; margin-left: auto; }
.cell u { width: 1px; height: 10px; background: #999; }
.lit { background: #f8f8f8; justify-content: center; }
.scenebar { padding-left: 5px; }
.shaded { width: 121px; border-left: 1px solid #8e8e8e; padding: 0 4px 0 5px; }
.two { width: 27px; margin-left: 4px; } .two, .sun { border-left: 1px solid #8e8e8e; }
.sp7 { width: 5px; } .sun { width: 27px; } .snd { width: 26px; justify-content: center; border: 0; }
.pic { width: 37px; padding: 0 4px 0 7px; } .pic u { margin-left: 6px; }
.giz { margin-left: auto; width: 56px; padding: 0 4px 0 6px; border-left: 1px solid #8e8e8e; }
.search { width: 206px; height: 14px; margin: 1px 5px 0 8px; border: 1px solid #777; border-radius: 7px; background: #d6d6d6; font-size: 11px; color: #777; display: flex; align-items: center; padding-left: 3px; line-height: 12px; letter-spacing: 0; box-shadow: inset 0 1px 1px #888; }
.scenebar .giz { margin-right: -1px; }
.search svg { margin-right: -1px; }
.scene { height: 214px; border: 1px solid; background: #484848; border-color: #3a3a3a #777 #777; }
.scene svg { height: 212px; }
.grid { stroke: #575757; stroke-dasharray: 1 1; fill: none; }
.dots { stroke: #7c7c7c; stroke-dasharray: 1 22.400; }
.slabel { font: 11px "Liberation Sans", sans-serif; fill: #f2f2f2; letter-spacing: 0; }
.tri { fill: #444; stroke: #e5e5e5; }
.gametabs { margin-top: 5px; }
.gm { border-left: 0; }
.gm svg { margin-right: 3px; }
.cons { margin-left: 11px; } .cons svg { margin-right: 3px; }
.gamebar { height: 17px; padding-left: 5px; }
.disp svg, .ratio svg { margin-left: auto; }
.disp { width: 81px; border-left: 1px solid #8e8e8e; padding: 0 4px 0 5px; letter-spacing: 0; }
.none { width: 6px; }
.ratio { width: 160px; padding: 0 4px 0 6px; letter-spacing: .2px; }
.scale { width: 181px; padding-left: 5px; }
.slider { height: 3px; background: #777; border-radius: 2px; box-shadow: 0 1px #ddd; position: relative; }
.slider::before { content: ""; position: absolute; left: -4px; top: -4px; width: 10px; height: 10px; border: 1px solid #555; border-radius: 50%; background: #e6e6e6; }
.scale .slider { width: 101px; margin: 1px 7px 0 9px; }
.mx { width: 100px; padding-left: 4px; letter-spacing: 0; } .mu { width: 67px; padding-left: 4px; letter-spacing: 0; } .st { width: 37px; padding-left: 4px; } .gz { width: 58px; padding: 0 4px 0 5px; } .gz u { margin-left: 4px; }
.game { height: 346px; border: 1px solid #1c1c1c; border-bottom-color: #666; background: #303030; padding: 0 41px; }
.stage { height: 344px; background: #535353; border: 1px solid #161616; border-width: 0 1px; display: flex; align-items: center; justify-content: center; font: 46.300px/48px "Liberation Sans", sans-serif; letter-spacing: 0; color: #efefef; padding: 0 5px 2px 0; }

.mid .bar { border-left: 1px solid #808080; }
.hbar, .pbar { padding-left: 5px; }
.create { width: 53px; border-left: 1px solid #8e8e8e; padding: 0 4px 0 6px; letter-spacing: .2px; }
.hbar .search { width: 252px; margin-left: 7px; }
.tree { height: 199px; background: #c2c2c2; border: 1px solid #8a8a8a; }
.scenehead { height: 18px; background: #dedede; border-bottom: 1px solid #999; display: flex; align-items: center; padding: 0 4px 0 5px; }
.scenehead .ul { margin: 0 2px 0 5px; } .usr { margin-left: auto; } .scenehead em { margin: 0 11px 0 3px; }
.row { height: 16px; line-height: 16px; display: flex; align-items: center; }
.r1 { padding-left: 30px; } .r2 { padding-left: 44px; } .r3 { padding-left: 58px; }
.tog svg { margin: 0 4px 0 -12px; }
.sel { background: #3e7ee6; color: #fff; }
.protabs { margin-top: 4px; }
.pbar { height: 17px; }
.pbar .search { width: 185px; margin: 1px 4px 0 10px; }
.ic { width: 22px; justify-content: center; }
.ic:nth-child(3) { border-left: 1px solid #8e8e8e; }
.end { border: 0; }
.project { height: 362px; border: 1px solid #808080; background: #c2c2c2; display: flex; }
.folders { width: 110px; border-right: 1px solid #808080; }
.fr { height: 16px; display: flex; align-items: center; }
.fr svg { margin-right: 2px; }
.fr span, .fr strong { padding-top: 1px; }
.assets .fr svg, .folders .fr svg:nth-last-child(2) { margin-bottom: 2px; }
.fav { margin: 1px 0 15px; padding-left: 5px; } .fav svg:first-child { margin-right: 4px; }
.root { background: #8c8c93; padding-left: 4px; } .root svg:first-child { margin-right: 3px; } .root strong { color: #fff; }
.f1 { padding-left: 18px; } .f1 svg:first-child { margin-right: 4px; } .f2 { padding-left: 30px; } .f3 { padding-left: 44px; }
.assets { flex: 1; display: flex; flex-direction: column; }
.crumb { height: 18px; background: #dedede; border-bottom: 1px solid #999; display: flex; align-items: center; padding-left: 6px; gap: 6px; margin-bottom: 1px; }
.assets .fr { padding-left: 16px; }
.zoombar { margin-top: auto; height: 17px; background: #dadada; border-top: 1px solid #b0b0b0; padding: 7px 16px 0 149px; }

.tab.ins { padding-left: 8px; } .serv { margin-left: 8px; color: #333; }
.insp { height: 416px; display: flex; border-left: 1px solid #808080; }
.props { flex: 1; background: #c2c2c2; border-top: 1px solid #808080; display: flex; flex-direction: column; }
.objhead { height: 48px; background: #dedede; display: flex; padding: 6px 0 0 5px; }
.oh { padding-left: 14px; }
.ohr { display: flex; align-items: center; height: 16px; }
.fld { height: 16px; background: #d2d2d0; border: 1px solid #999; border-top-color: #555; padding-left: 3px; line-height: 14px; }
.nm { width: 180px; margin: 0 6px 0 5px; line-height: 15px; }
.box { width: 12px; height: 12px; border: 1px solid #777; border-radius: 2px; background: #e6e6e6; margin-right: 4px; }
.ohr b { border-width: 5px 4.500px 0; border-top: 5px solid #444; margin-left: 5px; }
.tg { margin: 4px 0 0 -8px; }
.pop { height: 14px; border: 1px solid #777; border-radius: 3px; background: linear-gradient(#efefef, #cacaca); display: flex; align-items: center; justify-content: space-between; padding: 0 4px 0 5px; font-size: 10px; letter-spacing: .2px; }
.p1 { width: 108px; margin: 0 6px 0 5px; } .p2 { width: 95px; margin-left: 7px; }
.comp { border-top: 1px solid #777; }
.ch { display: flex; align-items: center; height: 18px; padding-left: 4px; }
.ch strong { flex: 1; }
.ar { margin-right: 2px; } .ci { margin-right: 18px; } .ci.off { margin-left: 10px; }
.bk { margin-right: 5px; }
.ch svg:last-child { margin-right: 1px; }
.rect { display: flex; height: 65px; }
.vert { writing-mode: vertical-rl; transform: rotate(180deg); width: 14px; font-size: 10px; line-height: 14px; letter-spacing: 0; text-align: center; padding-bottom: 2px; margin-top: 15px; height: 48px; margin-left: 1px; }
.anch { width: 117px; font-size: 10px; line-height: 14px; }
.anch span { padding-left: 7px; }
.vals { display: grid; grid-template-columns: 58px 59px 58px; column-gap: 2px; grid-auto-rows: 16px; }
.vals span { padding-left: 2px; line-height: 15px; }
.vals .fld { margin-top: -1px; }
.br { width: 52px; height: 18px; margin: -2px 0 0 6px; font-size: 10px; }
.pr { height: 18px; display: flex; align-items: center; padding-left: 15px; }
.pr label { width: 118px; flex: none; }
.anr { padding-left: 4px; } .anr svg { margin-right: 3px; }
.rot { margin-top: 8px; }
.xyz { display: grid; grid-template-columns: 12px 45px 15px 46px 15px 45px; }
.xyz q { line-height: 16px; padding-left: 1px; } .xyz q + .fld + q { padding-left: 4px; }
.rt { height: 166px; }
.cr { height: 19px; } .cr .ch { height: 20px; }
.img { height: 133px; }
.img .ch { height: 18px; } .ci2 { margin-right: 5px; margin-left: 2px; } .ci2 + svg { margin-right: 2px; }
.obj { width: 160px; height: 16px; background: #cdcdcb; border: 1px solid #999; border-top-color: #777; display: flex; align-items: center; padding-left: 2px; margin-right: 7px; }
.mt { letter-spacing: .4px; }
.obj svg { margin-right: 1px; }
.color { width: 160px; height: 16px; border: 1px solid #555; background: #fff; display: flex; align-items: flex-end; justify-content: flex-end; margin-right: 3px; }
.color s { width: 96px; height: 3px; background: #111; }
.ckr label { width: 119px; }
.p3 { width: 178px; }
.sub { padding-left: 30px; } .sub label { width: 104px; }
.mat { height: 44px; border-top: 1px solid #555; border-bottom: 1px solid #888; background: #dedede; display: flex; padding: 5px 0 0 4px; }
.ma { margin: 25px 3px 0 0; } .sw { width: 32px; height: 32px; background: #fff; margin-right: 8px; }
.mi { flex: 1; } .m1r { display: flex; align-items: center; height: 15px; font-size: 12.500px; letter-spacing: 0; } .m1r span { flex: 1; } .m1r svg:last-child { margin-right: 2px; }
.m2r { display: flex; align-items: center; height: 16px; margin-top: 4px; color: #888; } .dis { width: 206px; margin-left: 6px; border-color: #aaa; background: #d4d4d4; } .dis b { border-width: 3px 2.500px 0; border-top: 3px solid #888; }
.scroll { width: 15px; background: #c4c4c4; border: 1px solid #808080; border-right: 0; display: flex; flex-direction: column; align-items: center; padding: 4px 0; }
.scroll > b { border-width: 5px 4px 0; border-top: 5px solid #444; margin-top: 5px; } .scroll .up { transform: rotate(180deg); margin: 0 0 7px; }
.track { width: 13px; height: 385px; background: #eee; border: 1px solid #999; border-radius: 7px; }
.thumb { margin: -1px; height: 346px; border: 1px solid #555; border-radius: 7px; background: linear-gradient(90deg, #999, #7897ca 30%, #83878f 60%, #777); }
.pvhead { height: 18px; background: linear-gradient(#808080, #555); border: 1px solid #555; display: flex; align-items: center; padding: 1px 0 0 7px; }
.pvhead strong { color: #fff; margin-right: 6px; } .pvhead svg { filter: invert(.8); }
.grip { flex: 1; height: 4px; border: 1px solid #bbb; border-width: 1px 0; margin: 0 7px 0 5px; }
.preview { height: 180px; background: #303030; border: 1px solid #555; padding: 2px 0 0 77px; position: relative; }
.ln { stroke: #f2f2f2; } .ln2 { stroke: #707070; stroke-dasharray: 8 8; stroke-dashoffset: 4; }
.cap { position: absolute; left: 77px; top: 147px; width: 175px; text-align: center; font-weight: bold; letter-spacing: .45px; color: #fff; line-height: 13px; text-shadow: 1px 1px 1px #000, 1px 1px #222; }

.taskbar { margin-top: auto; height: 40px; background: #0c0c0c; display: flex; }
.app { width: 41px; margin: 0 4px; border-bottom: 2px solid transparent; display: flex; align-items: center; justify-content: center; padding-top: 2px; flex: none; }
.start { width: 48px; margin: 0 3px 0 0; }
.run { border-color: #777; }
.epic { flex-direction: column; color: #fff; font: bold 11px/12px "Open Sans", sans-serif; letter-spacing: 0; } .epic span { transform: scaleX(.7) scaleY(1.2); } .epic small { font-size: 5px; line-height: 6px; }
.tray { margin-left: auto; display: flex; align-items: center; color: #fff; font: 12px/18px "Open Sans", sans-serif; letter-spacing: 0; border-right: 1px solid #666; margin-right: 4px; padding-right: 20px; }
.t1 { margin-right: 17px; } .t2 { margin-right: 19px; } .t3 { margin-right: 16px; } .t4 { margin-right: 16px; } .t5 { margin-right: 13px; }
.eng { width: 40px; }
.clock { width: 52px; display: flex; flex-direction: column; align-items: center; letter-spacing: -.4px; } .t6 { margin-left: 20px; }
```
